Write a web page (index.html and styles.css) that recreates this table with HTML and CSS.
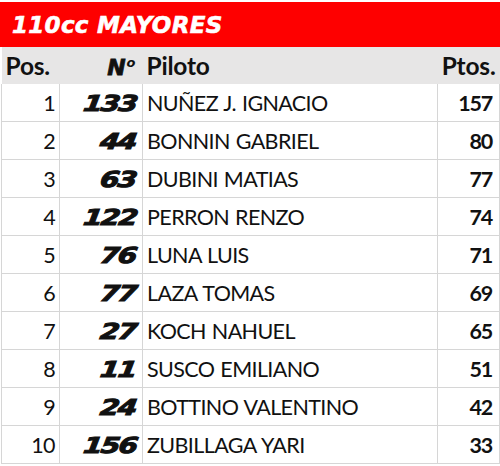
FILE: index.html
```html
<!DOCTYPE html>
<html>
<head>
<meta charset="utf-8">
<link rel="stylesheet" href="styles.css">
</head>
<body>
<div class="sheet">
  <div class="title"><span class="title-text">110cc MAYORES</span></div>
  <table class="standings">
    <colgroup>
      <col class="c-pos"><col class="c-num"><col class="c-name"><col class="c-pts">
    </colgroup>
    <thead>
      <tr><th class="pos">Pos.</th><th class="num"><span class="no">N<sup>o</sup></span></th><th class="name">Piloto</th><th class="pts">Ptos.</th></tr>
    </thead>
    <tbody>
      <tr><td class="pos">1</td><td class="num"><span class="race">133</span></td><td class="name">NUÑEZ J. IGNACIO</td><td class="pts">157</td></tr>
      <tr><td class="pos">2</td><td class="num"><span class="race">44</span></td><td class="name">BONNIN GABRIEL</td><td class="pts">80</td></tr>
      <tr><td class="pos">3</td><td class="num"><span class="race">63</span></td><td class="name">DUBINI MATIAS</td><td class="pts">77</td></tr>
      <tr><td class="pos">4</td><td class="num"><span class="race">122</span></td><td class="name">PERRON RENZO</td><td class="pts">74</td></tr>
      <tr><td class="pos">5</td><td class="num"><span class="race">76</span></td><td class="name">LUNA LUIS</td><td class="pts">71</td></tr>
      <tr><td class="pos">6</td><td class="num"><span class="race">77</span></td><td class="name">LAZA TOMAS</td><td class="pts">69</td></tr>
      <tr><td class="pos">7</td><td class="num"><span class="race">27</span></td><td class="name">KOCH NAHUEL</td><td class="pts">65</td></tr>
      <tr><td class="pos">8</td><td class="num"><span class="race">11</span></td><td class="name">SUSCO EMILIANO</td><td class="pts">51</td></tr>
      <tr><td class="pos">9</td><td class="num"><span class="race">24</span></td><td class="name">BOTTINO VALENTINO</td><td class="pts">42</td></tr>
      <tr><td class="pos">10</td><td class="num"><span class="race">156</span></td><td class="name">ZUBILLAGA YARI</td><td class="pts">33</td></tr>
    </tbody>
  </table>
</div>
</body>
</html>
```
FILE: styles.css
```css
html, body {
  margin: 0;
  padding: 0;
  background: #ffffff;
}
.sheet {
  width: 500px;
  padding-top: 2px;
  font-family: "Lato", "Open Sans", sans-serif;
  color: #111;
}
.title {
  height: 45px;
  background: #fe0000;
  display: flex;
  align-items: center;
  padding-left: 12px;
}
.title-text {
  font-family: "DejaVu Sans", sans-serif;
  font-weight: bold;
  font-style: oblique;
  font-size: 23px;
  color: #fff;
  letter-spacing: 0.3px;
  -webkit-text-stroke: 0.6px #fff;
}
.standings {
  border-collapse: collapse;
  width: 498px;
  margin-left: 1px;
  table-layout: fixed;
}
.c-pos { width: 58px; }
.c-num { width: 83px; }
.c-name { width: 295px; }
.c-pts { width: 62px; }
.standings thead th {
  background: #e7e6e6;
  height: 37px;
  padding: 0 4px;
  font-weight: bold;
  font-size: 24.5px;
  letter-spacing: -0.2px;
  border: none;
  vertical-align: middle;
}
.standings td {
  height: 37px;
  border: 1px solid #d6d6d6;
  padding: 0 4px;
  font-size: 21.5px;
  letter-spacing: -0.6px;
  word-spacing: 1px;
  vertical-align: middle;
  white-space: nowrap;
}
.standings tbody tr:first-child td { border-top: none; }
.pos { text-align: right; }
th.pos { text-align: left; padding-left: 7px; }
.num { text-align: right; }
.name { text-align: left; }
.pts { text-align: right; }
th.pts { padding-right: 3px; }
td.pts { font-weight: bold; padding-right: 7px; letter-spacing: -1.2px; }
.standings td.pos { padding-right: 4px; }
.race {
  display: inline-block;
  font-family: "DejaVu Sans", sans-serif;
  font-weight: bold;
  font-style: oblique;
  font-size: 22px;
  transform: scaleX(1.28) skewX(-6deg);
  transform-origin: right center;
  letter-spacing: -1.5px;
  -webkit-text-stroke: 1px #111;
  margin-right: 2px;
}
.no {
  display: inline-block;
  font-family: "DejaVu Sans", sans-serif;
  font-weight: bold;
  font-style: oblique;
  font-size: 22px;
  letter-spacing: 0;
  -webkit-text-stroke: 0.8px #111;
  margin-right: 3px;
}
.no sup {
  font-size: 13px;
  -webkit-text-stroke: 0;
  font-weight: bold;
  vertical-align: 8px;
  margin-left: 1px;
}
```
